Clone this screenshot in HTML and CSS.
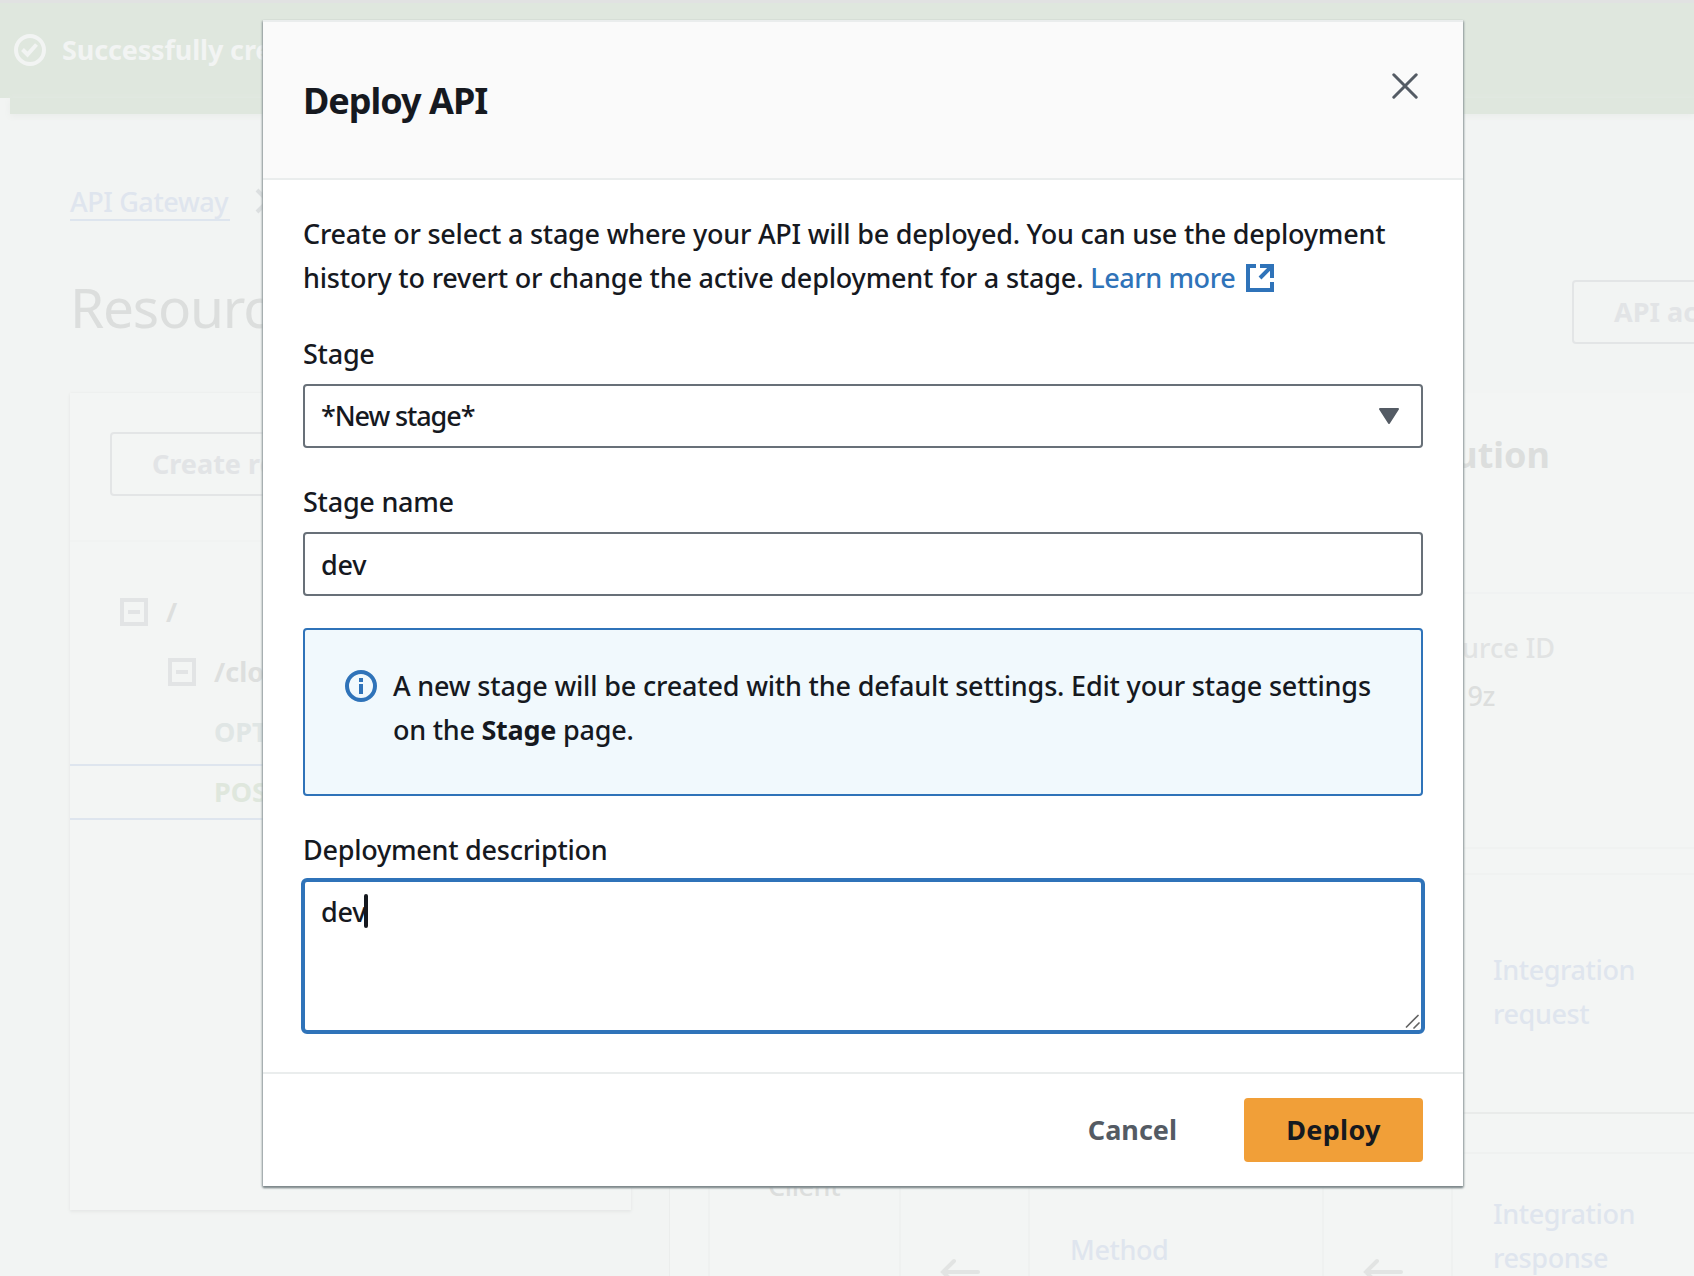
FILE: index.html
```html
<!DOCTYPE html>
<html lang="en">
<head>
<meta charset="utf-8">
<title>Deploy API</title>
<link rel="stylesheet" href="styles.css">
</head>
<body>
<div class="page">
  <div class="flash">
    <svg class="flash-icon" width="32" height="32" viewBox="0 0 32 32" fill="none" stroke="currentColor" stroke-width="4"><circle cx="16" cy="16" r="14"/><path d="M8.5 15.5l5 5 9-10"/></svg>
    <span class="flash-text">Successfully created</span>
  </div>
  <div class="flash-stack"></div>
  <nav class="crumbs">
    <a class="crumb">API Gateway</a>
    <svg width="16" height="26" viewBox="0 0 16 26" fill="none" stroke="currentColor" stroke-width="4"><path d="M2 2l11 11L2 24"/></svg>
  </nav>
  <header class="title-row">
    <h1 class="page-title">Resourc</h1>
    <button class="ghost-btn api-btn">API actions</button>
  </header>
  <main class="columns">
    <section class="tree-panel">
      <div class="tree-head"><button class="ghost-btn">Create resource</button></div>
      <div class="tree">
        <div class="node"><svg width="28" height="28" viewBox="0 0 28 28" fill="none" stroke="currentColor" stroke-width="4"><rect x="2" y="2" width="24" height="24"/><path d="M8 14h12"/></svg><b>/</b></div>
        <div class="node nested"><svg width="28" height="28" viewBox="0 0 28 28" fill="none" stroke="currentColor" stroke-width="4"><rect x="2" y="2" width="24" height="24"/><path d="M8 14h12"/></svg><b>/clo</b></div>
        <div class="verb options">OPTIONS</div>
        <div class="verb post">POST</div>
      </div>
    </section>
    <section class="method-panel">
      <div class="method-head"><h2 class="method-title">execution</h2></div>
      <div class="details">
        <div class="detail-label">Resource ID</div>
        <div class="detail-value">9z</div>
      </div>
      <div class="flow">
        <div class="flow-cell request-row">Integration<br>request</div>
        <div class="flow-gap"></div>
        <div class="response-row">
          <div class="box client">Client</div>
          <div class="arrow"><svg width="40" height="40" viewBox="0 0 40 40" fill="none" stroke="currentColor" stroke-width="4" stroke-linecap="round"><path d="M38 20H3M14 9L3 20l11 11"/></svg></div>
          <div class="box method">Method</div>
          <div class="arrow"><svg width="40" height="40" viewBox="0 0 40 40" fill="none" stroke="currentColor" stroke-width="4" stroke-linecap="round"><path d="M38 20H3M14 9L3 20l11 11"/></svg></div>
          <div class="box integration">Integration<br>response</div>
        </div>
      </div>
    </section>
  </main>

  <div class="modal" role="dialog">
    <div class="modal-head">
      <h2 class="modal-title">Deploy API</h2>
      <svg class="close" width="26" height="26" viewBox="0 0 26 26" fill="none" stroke="#545b64" stroke-width="3" stroke-linecap="round"><path d="M1.8 1.8l22.4 22.4M24.2 1.8L1.8 24.2"/></svg>
    </div>
    <div class="modal-body">
      <p class="intro"><span class="l1">Create or select a stage where your API will be deployed. You can use the deployment</span><br><span class="l2">history to revert or change the active deployment for a stage. </span><a class="learn">Learn more</a><svg class="ext" width="28" height="28" viewBox="0 0 28 28" fill="none" stroke="#2f73b9" stroke-width="4"><path d="M10 2H2v24h24v-8M14 2h12v12M25 3L14 14"/></svg></p>
      <label class="label">Stage</label>
      <div class="field"><span class="select-text">*New stage*</span><svg width="20" height="16" viewBox="0 0 20 16"><path d="M1 1h18L10 15z" fill="#545b64" stroke="#545b64" stroke-width="2" stroke-linejoin="round"/></svg></div>
      <label class="label">Stage name</label>
      <div class="field"><span class="value">dev</span></div>
      <div class="alert">
        <svg width="32" height="32" viewBox="0 0 32 32"><circle cx="16" cy="16" r="14" fill="none" stroke="#2f73b9" stroke-width="4"/><path d="M14 8h4v4h-4zM14 14h4v10h-4z" fill="#2f73b9"/></svg>
        <p><span class="a1">A new stage will be created with the default settings. Edit your stage settings</span><br><span class="a2">on the <b>Stage</b> page.</span></p>
      </div>
      <label class="label">Deployment description</label>
      <div class="textarea"><span>dev</span><i class="cursor"></i>
        <svg class="grip" width="16" height="16" viewBox="0 0 16 16" fill="none" stroke="#636363" stroke-width="1.7" stroke-linecap="round"><path d="M1.500 13L13 1.500M9 14l5-5"/></svg>
      </div>
    </div>
    <div class="modal-foot">
      <button class="cancel">Cancel</button>
      <button class="deploy">Deploy</button>
    </div>
  </div>
</div>
</body>
</html>
```
FILE: styles.css
```css
* { box-sizing: border-box; }
body, h1, h2, p { margin: 0; }
body { font-family: "Noto Sans", sans-serif; font-size: 27px; line-height: 44px; color: #16191f; }
button { font: inherit; font-weight: 700; margin: 0; }
svg { display: block; flex: none; }
.page { position: relative; width: 1694px; height: 1276px; overflow: hidden; background: #f2f4f3; white-space: nowrap; }

/* Dimmed console page */
.flash { display: flex; height: 98px; border-top: 3px solid #e1e2e2; padding: 25px 0 0 14px; background: #dfe7de; color: #f2f4f3; }
.flash-icon { margin-top: 6px; }
.flash-text { margin-left: 16px; font-weight: 700; letter-spacing: -0.15px; }
.flash-stack { height: 16px; margin-left: 10px; background: #dfe7de; box-shadow: 0 2px 6px #e9ecea; }
.crumbs { display: flex; align-items: flex-start; margin-top: 66px; padding-left: 70px; color: #dcdfe0; }
.crumb { height: 41px; border-bottom: 2px solid #dee5ee; color: #dfe5ee; width: 160px; }
.crumbs svg { margin: 8px 0 0 25px; }
.title-row { display: flex; height: 172px; padding-left: 70px; }
.page-title { flex: none; width: 220px; margin: 52px 1282px 0 0; height: 68px; font-size: 55px; line-height: 68px; font-weight: 450; letter-spacing: -1.2px; color: #dcdedd; }
.ghost-btn { height: 64px; padding: 0 40px; border: 2px solid #e3e5e6; border-radius: 4px; background: none; color: #e2e4e6; line-height: 60px; white-space: nowrap; }
.api-btn { flex: none; margin-top: 59px; }
.columns { display: flex; gap: 40px; padding-left: 70px; }
.tree-panel { flex: none; width: 561px; margin-right: -1px; height: 817px; background: #f3f5f4; box-shadow: 0 2px 3px #e6e8e7, 0 0 2px #eaecea; }
.tree-head { height: 149px; padding: 39px 40px; border-bottom: 2px solid #f1f3f2; }
.tree { padding-top: 40px; }
.node { display: flex; align-items: center; gap: 18px; height: 60px; padding-left: 50px; color: #e2e4e5; }
.node b { color: #dddfde; }
.nested { padding-left: 98px; }
.verb { padding: 8px 0 8px 144px; height: 60px; font-weight: 700; }
.options { color: #e0e6e5; }
.post { height: 56px; margin-top: 2px; padding: 4px 0 0 144px; color: #dfe7dd; border-top: 2px solid #dee5ee; border-bottom: 2px solid #dee5ee; }
.method-panel { flex: none; width: 1100px; margin-left: -1px; height: 900px; background: #f3f5f4; border-left: 1px solid #ebedec; }
.method-head { height: 201px; padding-top: 40px; border-bottom: 2px solid #f0f2f2; }
.method-title { width: 880px; text-align: right; font-size: 36px; line-height: 44px; color: #dcdedd; }
.details { height: 253px; padding-top: 32px; text-align: right; color: #e1e3e3; }
.detail-label { width: 885px; line-height: 44px; }
.detail-value { width: 825px; padding-top: 4px; color: #dcdedd; }
.flow { border-top: 2px solid #f0f2f1; padding-top: 24px; padding-left: 38px; }
.request-row { height: 241px; margin-left: 743px; border: 2px solid #f0f2f1; border-bottom-color: #e9ebea; padding: 73px 0 0 40px; color: #dfe5ee; }
.flow-gap { height: 38px; }
.response-row { display: flex; height: 200px; }
.response-row > div { flex: none; }
.box { border: 2px solid #eff1f0; }
.client { width: 193px; padding-left: 58px; padding-top: 10px; color: #dcdedd; }
.arrow { width: 127px; padding: 100px 0 0 39px; color: #e2e4e3; }
.method { width: 296px; padding: 74px 0 0 40px; color: #dfe5ee; }
.integration { width: 400px; padding: 38px 0 0 40px; color: #dfe5ee; }
.crumb, .request-row, .box, .detail-label, .detail-value { font-weight: 500; letter-spacing: -0.4px; }
.detail-label { letter-spacing: 0; }

/* Dialog */
.modal { position: absolute; left: 263px; top: 20px; width: 1200px; height: 1166px; border-top: 2px solid #eaeded; background: #fff; box-shadow: 0 2px 2px #7e898c, 1px 1px 2px #a5adaf, -1px 1px 2px #a5adaf; }
.modal-head { display: flex; justify-content: space-between; height: 158px; padding: 57px 45px 0 40px; background: #fafafa; border-bottom: 2px solid #eaeded; }
.modal-title { font-size: 36px; line-height: 44px; letter-spacing: -1px; }
.close { margin-top: -6px; }
.modal-body { height: 892px; padding: 32px 40px 0; font-weight: 500; letter-spacing: -0.25px; }
.intro { height: 88px; }
.l1 { letter-spacing: -0.23px; }
.l2 { letter-spacing: -0.19px; }
.learn { letter-spacing: -0.4px; color: #2f73b9; }
.ext { display: inline-block; margin-left: 11px; vertical-align: -4px; }
.label { display: block; margin-top: 32px; }
.field { display: flex; justify-content: space-between; align-items: center; height: 64px; margin-top: 8px; padding: 0 22px 0 16px; border: 2px solid #687078; border-radius: 4px; }
.select-text { letter-spacing: -1.1px; }
.value { padding-top: 2px; }
.field + .label { margin-top: 32px; }
.alert { display: flex; gap: 16px; height: 168px; margin-top: 32px; padding: 34px 40px; border: 2px solid #2f73b9; border-radius: 4px; background: #f1f9fd; }
.alert svg { margin-top: 6px; }
.a1 { letter-spacing: -0.18px; }
.alert + .label { margin-top: 32px; }
.textarea { position: relative; display: flex; height: 156px; margin: 6px -2px 0; padding: 8px 16px; border: 4px solid #2f73b9; border-radius: 6px; }
.cursor { width: 4px; height: 34px; margin: 4px 0 0 -2px; border-radius: 2px; background: #16191f; }
.grip { position: absolute; right: 0; bottom: 0; }
.modal-foot { display: flex; justify-content: flex-end; gap: 27px; border-top: 2px solid #eaeded; padding: 24px 40px; }
.modal-foot button { height: 64px; border: 0; border-radius: 4px; background: none; padding: 0 40px; color: #545b64; }
.modal-foot .deploy { width: 179px; padding: 0; letter-spacing: 0.3px; background: #f19f38; color: #16191f; }
```
